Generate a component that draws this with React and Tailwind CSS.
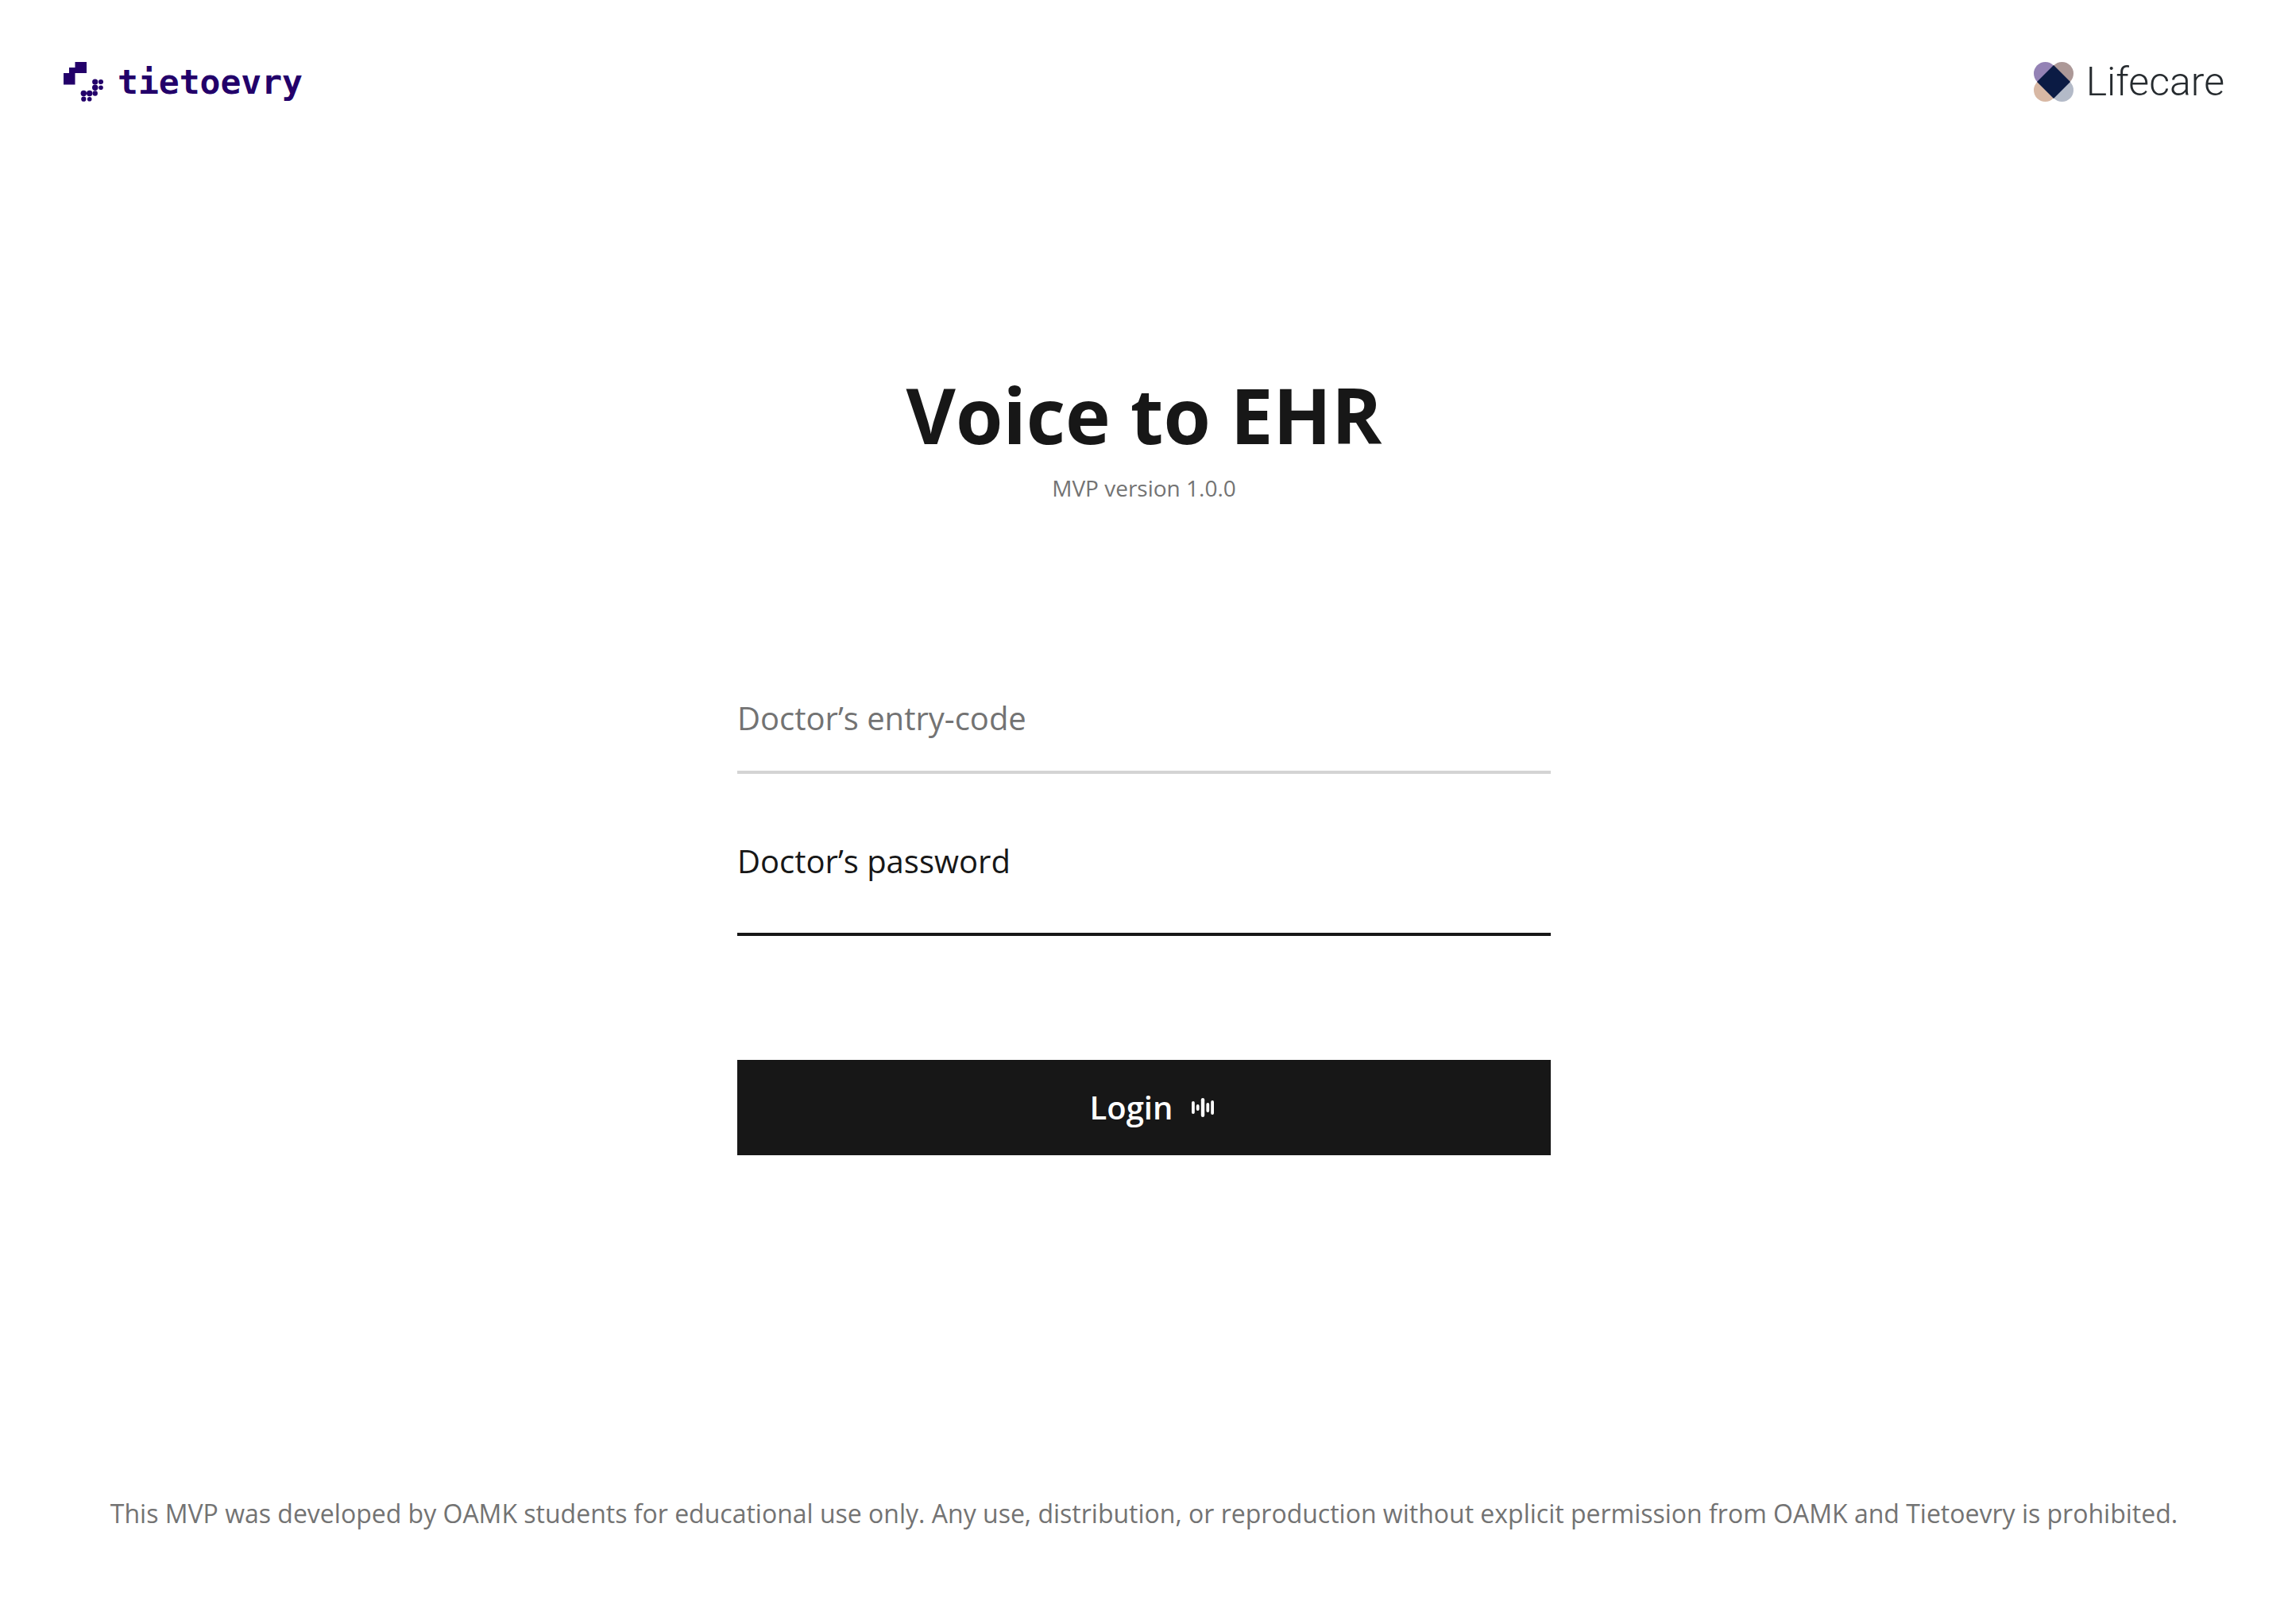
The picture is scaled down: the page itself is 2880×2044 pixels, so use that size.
function TietoevryMark() {
  return (
    <svg viewBox="0 0 50 50" className="size-[50px]" fill="#23006a" aria-hidden="true">
      <path d="M14.5 0H29V14H14.5V28.5H0V14H7V7H14.5Z" />
      <circle cx="39.7" cy="25" r="3.6" />
      <circle cx="47" cy="25" r="3.1" />
      <circle cx="39.7" cy="32.3" r="3.7" />
      <circle cx="47" cy="32.3" r="2.8" />
      <circle cx="39.7" cy="39.5" r="3.2" />
      <circle cx="25.3" cy="39.5" r="3.7" />
      <circle cx="32.7" cy="39.5" r="3.7" />
      <circle cx="25.3" cy="46.7" r="3.1" />
      <circle cx="32.7" cy="46.7" r="2.8" />
    </svg>
  );
}

function LifecareMark() {
  return (
    <svg viewBox="0 0 50 50" className="size-[50px]" aria-hidden="true">
      <circle cx="14.5" cy="14.5" r="14.5" fill="#9482b5" />
      <circle cx="35.5" cy="14.5" r="14.5" fill="#ac9897" />
      <circle cx="14.5" cy="35.5" r="14.5" fill="#d8b8a4" />
      <circle cx="35.5" cy="35.5" r="14.5" fill="#b3bac8" />
      <path d="M25 4L46 25L25 46L4 25Z" fill="#0b1b44" />
    </svg>
  );
}

function VoiceIcon() {
  return (
    <svg viewBox="0 0 28 24" className="h-6 w-7" fill="currentColor" aria-hidden="true">
      <rect x="0" y="4" width="3.8" height="16" rx="1.9" />
      <rect x="5.8" y="8" width="3.8" height="8" rx="1.9" />
      <rect x="11.8" y="0" width="4.4" height="24" rx="2.2" />
      <rect x="18.4" y="6" width="3.8" height="12" rx="1.9" />
      <rect x="24.2" y="3" width="3.8" height="18" rx="1.9" />
    </svg>
  );
}

export default function App() {
  return (
    <div className="flex min-h-screen flex-col bg-white font-['Open_Sans',sans-serif] text-[#171717]">
      <header className="flex items-center justify-between px-20 pt-[78px]">
        <div className="flex h-[50px] items-center gap-[18px]">
          <TietoevryMark />
          <span className="font-['DejaVu_Sans_Mono',monospace] text-[43px] leading-[50px] font-bold text-[#23006a]">
            tietoevry
          </span>
        </div>
        <div className="flex h-[50px] items-center gap-4">
          <LifecareMark />
          <span className="font-[Roboto,sans-serif] text-[50px] leading-[50px] font-light text-[#262b2f]">
            Lifecare
          </span>
        </div>
      </header>

      <main className="flex flex-1 flex-col items-center justify-center pb-[94px]">
        <h1 className="text-[96px] leading-[120px] font-bold">Voice to EHR</h1>
        <p className="mt-3 text-[28px] leading-10 text-[#737373]">MVP version 1.0.0</p>

        <form className="mt-60 flex w-full max-w-5xl flex-col" onSubmit={(e) => e.preventDefault()}>
          <input
            id="entry-code"
            type="text"
            aria-label="Doctor’s entry-code"
            placeholder="Doctor’s entry-code"
            className="h-[100px] w-full border-b-4 border-[#d4d4d4] pb-9 text-[40px] leading-[60px] outline-none placeholder:text-[#737373]"
          />
          <label htmlFor="password" className="mt-20 text-[40px] leading-[60px]">
            Doctor’s password
          </label>
          <input
            id="password"
            type="password"
            className="h-16 w-full border-b-4 border-[#171717] text-[40px] outline-none"
          />
          <button
            type="submit"
            className="mt-[156px] flex h-[120px] w-full items-center justify-center gap-6 bg-[#171717] pl-5 text-[40px] leading-[60px] font-semibold text-white"
          >
            Login
            <VoiceIcon />
          </button>
        </form>
      </main>

      <footer className="px-20 pb-[115px] text-center text-[32px] leading-[48px] text-[#737373]">
        This MVP was developed by OAMK students for educational use only. Any use, distribution, or reproduction
        without explicit permission from OAMK and Tietoevry is prohibited.
      </footer>
    </div>
  );
}
